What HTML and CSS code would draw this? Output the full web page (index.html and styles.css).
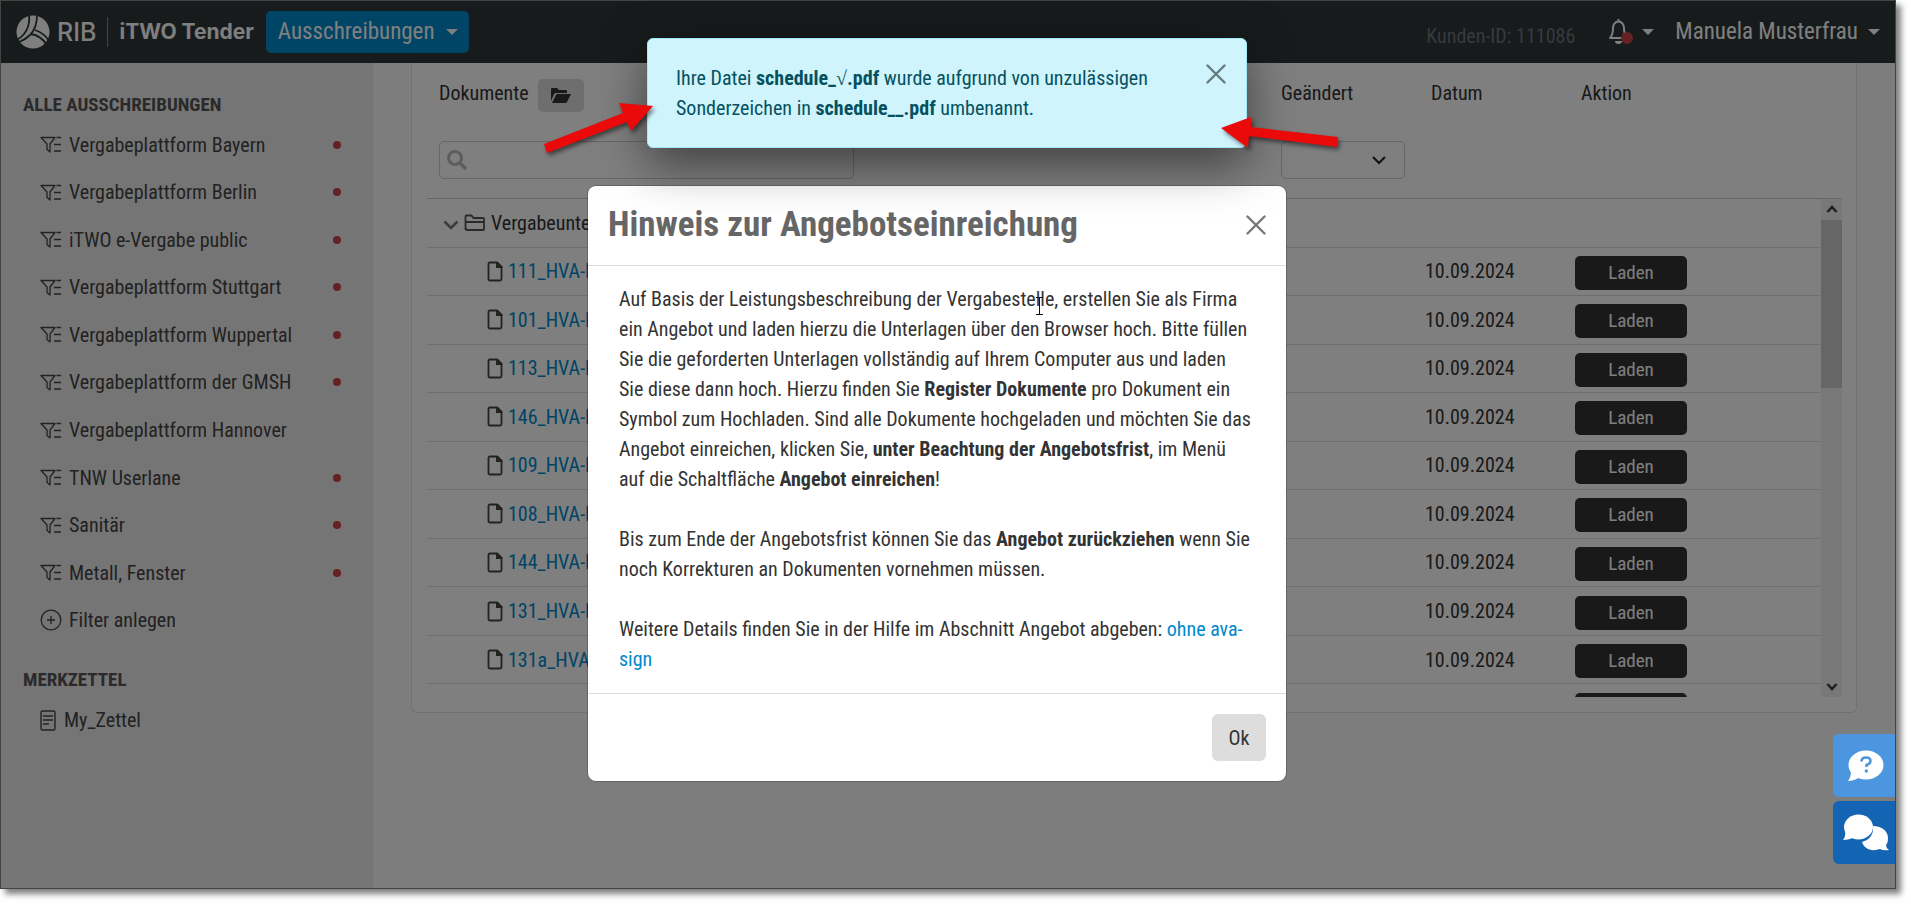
FILE: index.html
```html
<!DOCTYPE html>
<html lang="de">
<head>
<meta charset="utf-8">
<title>iTWO Tender</title>
<link rel="stylesheet" href="styles.css">
</head>
<body>
<svg width="0" height="0" class="sprite" aria-hidden="true">
  <symbol id="i-filter" viewBox="0 0 22 17"><path d="M1 1.500h14l-5 6.500v8l-3-2.500V8z M16.500 1.500h4.500M14 8.500h7M14 15h7" fill="none" stroke="currentColor" stroke-width="1.300" stroke-linejoin="round"/></symbol>
  <symbol id="i-doc" viewBox="0 0 16 21"><path d="M3 1.500h7l4.500 4.500v12q0 1.500-1.500 1.500H3q-1.500 0-1.500-1.500V3Q1.500 1.500 3 1.500z" fill="none" stroke="currentColor" stroke-width="1.800"/><path d="M9 1h2l4.500 4.500V7H9z" fill="currentColor"/></symbol>
  <symbol id="i-x" viewBox="0 0 20 20"><path d="M1.500 1.500l17 17M18.500 1.500l-17 17" stroke="currentColor" stroke-width="2.400" stroke-linecap="round"/></symbol>
</svg>
<div class="stage">
  <header class="topbar">
    <a class="brand" href="#">
      <svg class="brand-mark" viewBox="0 0 34 34"><circle cx="17" cy="17" r="16.500" fill="#fff"/><path d="M13 0C14 8 12 14 8 19S3 24 0 25M21 0C21 9 19 15 14 20S5 26 1 28M19 15C25 17 30 21 33 26M15 19C21 20 27 24 30 29" fill="none" stroke="#2e3638" stroke-width="1.800"/></svg>
      <span class="brand-rib">RIB</span><span class="brand-name">iTWO Tender</span>
    </a>
    <button class="nav-button" type="button">Ausschreibungen<span class="caret"></span></button>
    <div class="topbar-right">
      <span class="customer">Kunden-ID: 111086</span>
      <button class="bell" type="button" aria-label="Benachrichtigungen">
        <svg width="28" height="32" viewBox="0 0 28 32"><path d="M3 22c2-2 3-4 3-10a5.500 6.500 0 0 1 11 0c0 6 1 8 3 10z" fill="none" stroke="#fff" stroke-width="2" stroke-linejoin="round"/><path d="M11.500 3v3" stroke="#fff" stroke-width="2"/><path d="M8 25h7a3.500 3 0 0 1-7 0z" fill="#fff"/><circle cx="20" cy="22" r="6" fill="#c84448"/></svg>
        <span class="caret"></span>
      </button>
      <button class="user" type="button">Manuela Musterfrau<span class="caret"></span></button>
    </div>
  </header>
  <div class="columns">
    <nav class="sidebar">
      <h2>ALLE AUSSCHREIBUNGEN</h2>
      <ul class="filters">
        <li><a href="#"><svg class="ic"><use href="#i-filter"/></svg>Vergabeplattform Bayern<i class="dot"></i></a></li>
        <li><a href="#"><svg class="ic"><use href="#i-filter"/></svg>Vergabeplattform Berlin<i class="dot"></i></a></li>
        <li><a href="#"><svg class="ic"><use href="#i-filter"/></svg>iTWO e-Vergabe public<i class="dot"></i></a></li>
        <li><a href="#"><svg class="ic"><use href="#i-filter"/></svg>Vergabeplattform Stuttgart<i class="dot"></i></a></li>
        <li><a href="#"><svg class="ic"><use href="#i-filter"/></svg>Vergabeplattform Wuppertal<i class="dot"></i></a></li>
        <li><a href="#"><svg class="ic"><use href="#i-filter"/></svg>Vergabeplattform der GMSH<i class="dot"></i></a></li>
        <li><a href="#"><svg class="ic"><use href="#i-filter"/></svg>Vergabeplattform Hannover</a></li>
        <li><a href="#"><svg class="ic"><use href="#i-filter"/></svg>TNW Userlane<i class="dot"></i></a></li>
        <li><a href="#"><svg class="ic"><use href="#i-filter"/></svg>Sanitär<i class="dot"></i></a></li>
        <li><a href="#"><svg class="ic"><use href="#i-filter"/></svg>Metall, Fenster<i class="dot"></i></a></li>
        <li><a href="#"><svg class="ic plus" viewBox="0 0 22 22"><g fill="none" stroke="currentColor" stroke-width="1.300"><circle cx="11" cy="11" r="9.800"/><path d="M11 7v8M7 11h8"/></g></svg>Filter anlegen</a></li>
      </ul>
      <h2>MERKZETTEL</h2>
      <ul class="notes">
        <li><a href="#"><svg class="note" viewBox="0 0 16 21"><g fill="none" stroke="currentColor" stroke-width="1.400"><rect x="1" y="1" width="14" height="19" rx="1.500"/><path d="M3 6h10M3 10h10M3 14h6"/></g></svg>My_Zettel</a></li>
      </ul>
    </nav>
    <main class="content">
      <section class="panel">
        <div class="head">
          <div class="head-doc"><span>Dokumente</span>
            <button class="folder-btn" type="button" aria-label="Ordner öffnen"><svg width="22" height="17" viewBox="0 0 22 17"><path d="M1 14V2q0-1 1-1h5l2 2h7q1 0 1 1v2H6q-1 0-2 1z M2 16L6 8q.5-1 1.500-1H21l-4 8q-.5 1-1.500 1z" fill="#333"/></svg></button></div>
          <span>Geändert</span><span>Datum</span><span>Aktion</span>
        </div>
        <div class="head tools">
          <label class="search"><svg width="22" height="22" viewBox="0 0 22 22"><circle cx="9" cy="9" r="6.500" fill="none" stroke="#bbb" stroke-width="3"/><path d="M14 14l6 6" stroke="#bbb" stroke-width="3.600"/></svg><input type="text" aria-label="Dokumente suchen"></label>
          <div class="select"><select aria-label="Geändert"><option></option></select><svg width="14" height="9" viewBox="0 0 14 9"><path d="M1 1l6 6 6-6" fill="none" stroke="#222" stroke-width="2"/></svg></div>
        </div>
        <div class="list">
          <div class="clip">
            <table>
              <colgroup><col><col class="c-changed"><col class="c-date"><col class="c-action"></colgroup>
              <tbody>
              <tr><td colspan="4" class="group-cell"><div class="name group"><svg class="chevron" width="16" height="10" viewBox="0 0 16 10"><path d="M1.500 1.500L8 8l6.500-6.500" fill="none" stroke="#777" stroke-width="2.600"/></svg><svg width="22" height="18" viewBox="0 0 22 18"><path d="M1.500 15V2.500q0-1 1-1h5l2 2.500h9.500q1 0 1 1V15q0 1-1 1h-16q-1 0-1-1zM1.500 8h19" fill="none" stroke="#555" stroke-width="1.800"/></svg>Vergabeunterlagen</div></td></tr>
              <tr><td><div class="name"><svg class="doc"><use href="#i-doc"/></svg><a href="#">111_HVA-B</a></div></td><td></td><td>10.09.2024</td><td><button class="load" type="button">Laden</button></td></tr>
              <tr><td><div class="name"><svg class="doc"><use href="#i-doc"/></svg><a href="#">101_HVA-B</a></div></td><td></td><td>10.09.2024</td><td><button class="load" type="button">Laden</button></td></tr>
              <tr><td><div class="name"><svg class="doc"><use href="#i-doc"/></svg><a href="#">113_HVA-B</a></div></td><td></td><td>10.09.2024</td><td><button class="load" type="button">Laden</button></td></tr>
              <tr><td><div class="name"><svg class="doc"><use href="#i-doc"/></svg><a href="#">146_HVA-B</a></div></td><td></td><td>10.09.2024</td><td><button class="load" type="button">Laden</button></td></tr>
              <tr><td><div class="name"><svg class="doc"><use href="#i-doc"/></svg><a href="#">109_HVA-B</a></div></td><td></td><td>10.09.2024</td><td><button class="load" type="button">Laden</button></td></tr>
              <tr><td><div class="name"><svg class="doc"><use href="#i-doc"/></svg><a href="#">108_HVA-B</a></div></td><td></td><td>10.09.2024</td><td><button class="load" type="button">Laden</button></td></tr>
              <tr><td><div class="name"><svg class="doc"><use href="#i-doc"/></svg><a href="#">144_HVA-B</a></div></td><td></td><td>10.09.2024</td><td><button class="load" type="button">Laden</button></td></tr>
              <tr><td><div class="name"><svg class="doc"><use href="#i-doc"/></svg><a href="#">131_HVA-B</a></div></td><td></td><td>10.09.2024</td><td><button class="load" type="button">Laden</button></td></tr>
              <tr><td><div class="name"><svg class="doc"><use href="#i-doc"/></svg><a href="#">131a_HVA</a></div></td><td></td><td>10.09.2024</td><td><button class="load" type="button">Laden</button></td></tr>
              <tr><td></td><td></td><td></td><td><button class="load" type="button" aria-label="Laden"></button></td></tr>
              </tbody>
            </table>
          </div>
          <div class="scrollbar" aria-hidden="true">
            <svg width="12" height="8" viewBox="0 0 12 8"><path d="M1.500 7L6 2l4.500 5" fill="none" stroke="#444" stroke-width="2.600"/></svg>
            <div class="thumb"></div>
            <svg width="12" height="8" viewBox="0 0 12 8"><path d="M1.500 1L6 6l4.500-5" fill="none" stroke="#444" stroke-width="2.600"/></svg>
          </div>
        </div>
      </section>
    </main>
  </div>
  <div class="overlay">
    <section class="modal" role="dialog" aria-labelledby="modal-title">
      <div class="modal-head"><h1 id="modal-title">Hinweis zur Angebotseinreichung</h1><button class="close" type="button" aria-label="Schließen"><svg width="20" height="20"><use href="#i-x"/></svg></button></div>
      <div class="modal-body">
        <p>Auf Basis der Leistungsbeschreibung der Vergabestelle, erstellen Sie als Firma<br>ein Angebot und laden hierzu die Unterlagen über den Browser hoch. Bitte füllen<br>Sie die geforderten Unterlagen vollständig auf Ihrem Computer aus und laden<br>Sie diese dann hoch. Hierzu finden Sie <b>Register Dokumente</b> pro Dokument ein<br>Symbol zum Hochladen. Sind alle Dokumente hochgeladen und möchten Sie das<br>Angebot einreichen, klicken Sie, <b>unter Beachtung der Angebotsfrist</b>, im Menü<br>auf die Schaltfläche <b>Angebot einreichen</b>!</p>
        <p>Bis zum Ende der Angebotsfrist können Sie das <b>Angebot zurückziehen</b> wenn Sie<br>noch Korrekturen an Dokumenten vornehmen müssen.</p>
        <p>Weitere Details finden Sie in der Hilfe im Abschnitt Angebot abgeben: <a href="#">ohne ava-<br>sign</a></p>
      </div>
      <div class="modal-foot"><button class="ok" type="button">Ok</button></div>
      <svg class="cursor" width="9" height="20" viewBox="0 0 9 20"><path d="M1 1.500h7M1 18.500h7M4.500 1v18" fill="none" stroke="#111" stroke-width="1"/></svg>
    </section>
  </div>
  <div class="toast" role="alert">
    <p>Ihre Datei <b>schedule_<span class="root">√</span>.pdf</b> wurde aufgrund von unzulässigen<br>Sonderzeichen in <b>schedule__.pdf</b> umbenannt.</p>
    <button class="close" type="button" aria-label="Schließen"><svg width="20" height="20"><use href="#i-x"/></svg></button>
  </div>
  <svg class="arrow arrow-left" width="110" height="54" viewBox="0 0 110 54"><path d="M0 42L79 11 75 1l34 3-22 25-4-9L3 51z" fill="#ea0a0a"/></svg>
  <svg class="arrow arrow-right" width="118" height="32" viewBox="0 0 118 32"><path d="M0 11L30 0v10l87 10-1 10-88-11-1 12z" fill="#ea0a0a"/></svg>
  <div class="help">
    <button class="help-q" type="button" aria-label="Hilfe"><svg width="36" height="32" viewBox="0 0 36 32"><ellipse cx="18" cy="15" rx="17.500" ry="14.500" fill="#fff"/><path d="M3 21q0 6-3 10 6 0 12-4z" fill="#fff"/><path d="M13.500 11.500q0-4 4.500-4t4.500 3.500q0 2.500-4 4V17" fill="none" stroke="#4c96e0" stroke-width="2.600"/><circle cx="18.300" cy="21" r="1.700" fill="#4c96e0"/></svg></button>
    <button class="help-chat" type="button" aria-label="Chat"><svg width="46" height="38" viewBox="0 0 46 38"><path d="M30 12c9 0 15 5 15 12 0 4-1 6-2 7q0 3 3 5-5 1-9-1c-8 3-16 0-18-7 7-2 12-7 11-16z" fill="#fff"/><ellipse cx="15.500" cy="13" rx="14.500" ry="12.500" fill="#fff"/><path d="M2 18q1 4-2 8 5 0 10-2z" fill="#fff"/></svg></button>
  </div>
</div>
</body>
</html>
```
FILE: styles.css
```css
* { box-sizing: border-box; }
body {
  margin: 0;
  height: 100vh;
  padding: 0 15px 15px 0;
  background: #fff;
  color: #333;
  font: 20px/30px "Roboto Condensed", "Liberation Sans Narrow", Roboto, sans-serif;
  overflow: hidden;
}
h1, h2, p, ul { margin: 0; padding: 0; }
ul { list-style: none; }
a { color: #08c; text-decoration: none; }
button, input, select { font: inherit; color: inherit; border: 0; padding: 0; background: none; }
.sprite { position: absolute; }
.stage {
  position: relative;
  height: 100%;
  display: flex;
  flex-direction: column;
  border: 1px solid #444;
  background: #fbfbfb;
  box-shadow: 5px 5px 6px rgba(0, 0, 0, .5);
}

/* top bar */
.topbar {
  display: flex;
  align-items: center;
  height: 62px;
  padding: 0 15px;
  background: #2e3638;
  color: #fff;
}
.brand { display: flex; align-items: center; color: #fff; font-family: Inter, sans-serif; }
.brand-mark { width: 34px; height: 34px; }
.brand-rib { padding: 0 11px 0 7px; font-size: 25px; font-weight: 500; }
.brand-name { padding-left: 11px; border-left: 1px solid #888; font-size: 21px; font-weight: 700; }
.caret { border: 6px solid transparent; border-top-color: currentColor; border-bottom: 0; }
.nav-button {
  display: flex;
  align-items: center;
  gap: 11px;
  height: 42px;
  margin-left: 12px;
  padding: 0 11px 0 12px;
  border-radius: 5px;
  background: #08c;
  font-size: 23px;
}
.topbar-right { display: flex; align-items: center; margin-left: auto; }
.customer { padding-top: 8px; color: #6c757d; }
.bell { display: flex; align-items: center; gap: 7px; margin: 0 21px 0 32px; }
.user { display: flex; align-items: center; gap: 10px; font-size: 23px; }

/* sidebar */
.columns { flex: 1; display: flex; min-height: 0; }
.sidebar { width: 372px; background: #ebebeb; padding: 27px 32px 0 22px; }
.sidebar h2 { font-size: 19px; line-height: 30px; color: #555; }
.sidebar a { display: flex; align-items: center; color: #444; }
.filters { display: grid; grid-auto-rows: 1fr; height: 523px; margin: 1px 0 21px; }
.filters a, .filters li { display: flex; flex: 1; align-items: center; }
.ic { width: 22px; height: 17px; margin: 0 7px 0 17px; }
.ic.plus { height: 22px; }
.dot { width: 8px; height: 8px; margin-left: auto; border-radius: 50%; background: #c84448; }
.notes { padding-top: 10px; }
.note { width: 16px; height: 21px; margin: 0 8px 0 17px; }

/* document panel */
.content { flex: 1; padding: 0 38px; min-width: 0; }
.panel {
  padding: 15px 14px 15px 15px;
  border: 1px solid #e2e2e2;
  border-top: 0;
  border-radius: 0 0 6px 6px;
  background: #fff;
}
.head { display: grid; grid-template-columns: 1fr 150px 150px 261px; height: 63px; padding-left: 12px; }
.head-doc { display: flex; gap: 9px; align-items: flex-start; }
.folder-btn { display: grid; place-items: center; width: 46px; height: 33px; margin-top: 1px; border-radius: 5px; background: #ddd; }
.tools { height: 57px; }
.search {
  display: flex;
  align-items: center;
  width: 415px;
  height: 38px;
  padding: 0 6px;
  border: 1px solid #ccc;
  border-radius: 5px;
}
.search input { flex: 1; min-width: 0; outline: 0; }
.select { position: relative; width: 124px; height: 38px; }
.select select { width: 100%; height: 100%; border: 1px solid #ccc; border-radius: 5px; appearance: none; }
.select svg { position: absolute; right: 19px; top: 15px; pointer-events: none; }
.list { display: flex; height: 499px; border-top: 1px solid #ccc; }
.clip { flex: 1; overflow: hidden; }
table { width: 100%; height: 534px; border-collapse: separate; border-spacing: 0; table-layout: fixed; }
.c-changed { width: 144px; }
.c-date { width: 150px; }
.c-action { width: 245px; }
td { height: 48px; padding: 0; border-bottom: 1px solid #ddd; white-space: nowrap; }
td:last-child { padding-top: 3px; }
td.group-cell { padding-top: 0; }
.name { display: flex; align-items: center; gap: 5px; padding-left: 60px; }
.name.group { padding-left: 16px; }
.chevron { margin-top: 4px; }
.doc { width: 16px; height: 21px; color: #444; }
.load {
  display: block;
  width: 112px;
  height: 34px;
  border-radius: 5px;
  background: #333;
  color: #fff;
  font-size: 19px;
}
.scrollbar {
  display: flex;
  flex-direction: column;
  align-items: center;
  width: 21px;
  margin-left: 1px;
  padding: 6px 0;
  background: #f0f0f0;
}
.thumb { width: 100%; height: 168px; margin: 7px 0 auto; background: #cdcdcd; }

/* dialog */
.overlay {
  position: absolute;
  inset: 0;
  display: flex;
  justify-content: center;
  align-items: flex-start;
  padding: 185px 22px 0 0;
  background: rgba(0, 0, 0, .5);
}
.modal { position: relative; width: 698px; border-radius: 8px; background: #fff; box-shadow: 0 0 0 1px rgba(0, 0, 0, .2); }
.modal-head { display: flex; justify-content: space-between; align-items: center; height: 80px; padding: 0 20px 1px; border-bottom: 1px solid #ddd; }
h1 { font-size: 35px; line-height: 40px; color: #666; }
.close { display: block; width: 20px; height: 20px; color: #777; }
.close svg { display: block; }
.modal-body { display: grid; gap: 30px; padding: 18px 30px 19px 31px; white-space: nowrap; }
.modal-foot { display: flex; justify-content: flex-end; padding: 20px; border-top: 1px solid #ddd; }
.ok { width: 54px; height: 47px; border-radius: 6px; background: #ddd; }
.cursor { position: absolute; left: 447px; top: 110px; }

/* notification */
.toast {
  position: absolute;
  top: 37px;
  left: 50%;
  display: flex;
  justify-content: space-between;
  width: 600px;
  margin-left: -301px;
  padding: 24px 20px 24px 28px;
  border: 1px solid #9eeaf9;
  border-radius: 6px;
  background: #cff4fc;
  color: #055160;
  box-shadow: 0 16px 48px rgba(0, 0, 0, .5);
}
.toast .close { margin-top: 1px; color: #687a7e; }
.root { font-family: "Liberation Serif", serif; font-weight: 400; line-height: 1; }
.arrow { position: absolute; filter: drop-shadow(2px 3px 2px rgba(0, 0, 0, .5)); }
.arrow-left { left: 543px; top: 101px; }
.arrow-right { left: 1220px; top: 116px; }
.help { position: absolute; right: 0; bottom: 24px; display: grid; gap: 4px; }
.help button { display: grid; place-items: center; width: 62px; height: 63px; padding-left: 4px; border-radius: 6px 0 0 6px; }
.help-q { background: #4c96e0; }
.help-chat { background: #1464b4; }
```
